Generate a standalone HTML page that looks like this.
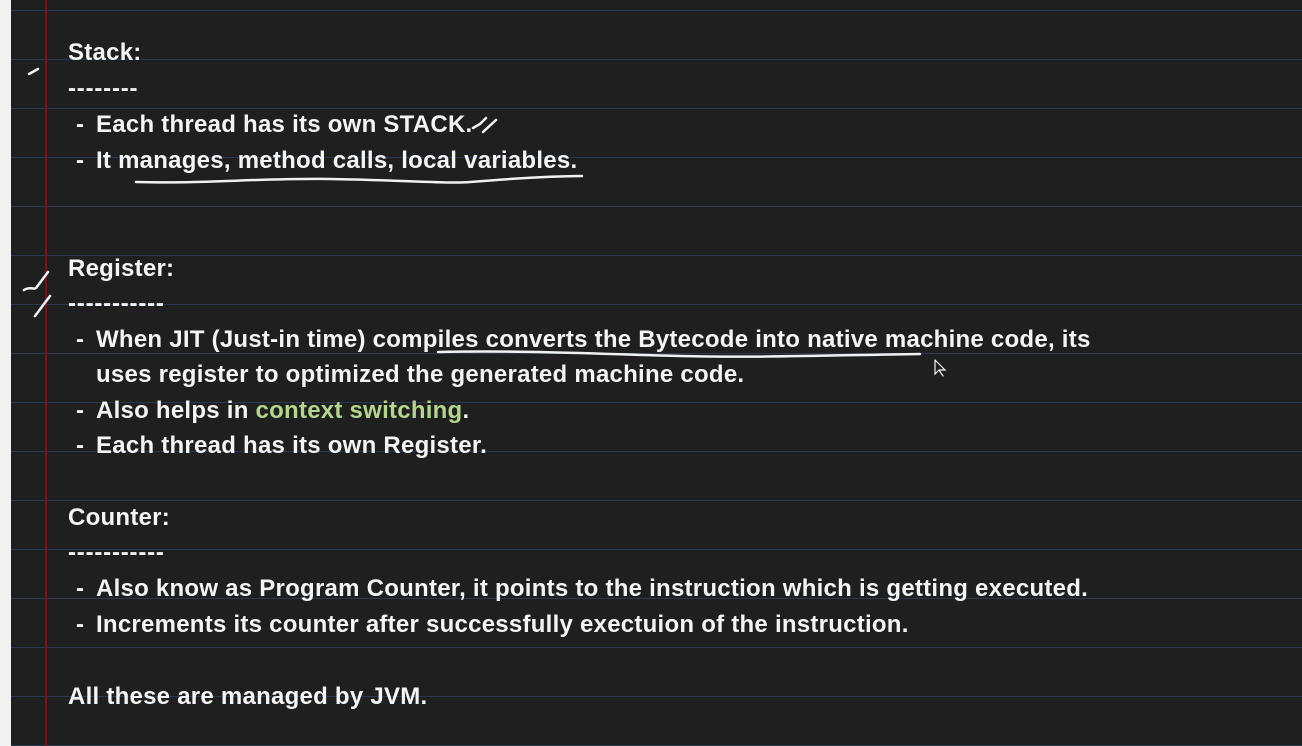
<!DOCTYPE html>
<html><head><meta charset="utf-8"><style>
html,body{margin:0;padding:0;}
body{width:1302px;height:746px;overflow:hidden;background:#1f1f1f;position:relative;font-family:"Liberation Sans",Arial,sans-serif;}
.strip{position:absolute;left:0;top:0;width:11px;height:746px;background:#f2f2f2;}
.hl{position:absolute;left:11px;width:1291px;height:1px;background:#293a50;}
.red{position:absolute;left:45px;top:0;width:2px;height:746px;background:#7a1212;}
.t{position:absolute;color:#f4f4f4;font-weight:bold;font-size:24px;letter-spacing:0.25px;line-height:28px;white-space:nowrap;margin-top:2px;}
.d{letter-spacing:0.8px;}
.g{color:#b3d68c;}
svg{position:absolute;left:0;top:0;}
</style></head><body>
<div class="strip"></div>
<div class="hl" style="top:10px"></div><div class="hl" style="top:59px"></div><div class="hl" style="top:108px"></div><div class="hl" style="top:157px"></div><div class="hl" style="top:206px"></div><div class="hl" style="top:255px"></div><div class="hl" style="top:304px"></div><div class="hl" style="top:353px"></div><div class="hl" style="top:402px"></div><div class="hl" style="top:451px"></div><div class="hl" style="top:500px"></div><div class="hl" style="top:549px"></div><div class="hl" style="top:598px"></div><div class="hl" style="top:647px"></div><div class="hl" style="top:696px"></div><div class="hl" style="top:745px"></div>
<div class="red"></div>

<div class="t" style="left:68px;top:37px">Stack:</div>
<div class="t d" style="left:68px;top:73px">--------</div>
<div class="t" style="left:76px;top:109px">-</div><div class="t" style="left:96px;top:109px">Each thread has its own STACK.</div>
<div class="t" style="left:76px;top:145px">-</div><div class="t" style="left:96px;top:145px">It manages, method calls, local variables.</div>

<div class="t" style="left:68px;top:253px">Register:</div>
<div class="t d" style="left:68px;top:288px">-----------</div>
<div class="t" style="left:76px;top:324px">-</div><div class="t" style="left:96px;top:324px">When JIT (Just-in time) compiles converts the Bytecode into native machine code, its</div>
<div class="t" style="left:96px;top:359px">uses register to optimized the generated machine code.</div>
<div class="t" style="left:76px;top:395px">-</div><div class="t" style="left:96px;top:395px">Also helps in <span class="g">context switching</span>.</div>
<div class="t" style="left:76px;top:430px">-</div><div class="t" style="left:96px;top:430px">Each thread has its own Register.</div>

<div class="t" style="left:68px;top:502px">Counter:</div>
<div class="t d" style="left:68px;top:537px">-----------</div>
<div class="t" style="left:76px;top:573px">-</div><div class="t" style="left:96px;top:573px">Also know as Program Counter, it points to the instruction which is getting executed.</div>
<div class="t" style="left:76px;top:609px">-</div><div class="t" style="left:96px;top:609px">Increments its counter after successfully exectuion of the instruction.</div>

<div class="t" style="left:68px;top:681px">All these are managed by JVM.</div>

<svg width="1302" height="746" fill="none" stroke="#f2f2f2" stroke-linecap="round" stroke-width="2.5">
<path d="M29 74 L38 69"/>
<path d="M473 128 L480 124 L486 118"/>
<path d="M483 132 L496 120"/>
<path d="M136 182 C200 184 260 178 330 179 C400 180 450 184 470 182 C520 178 560 176 582 176"/>
<path d="M24 290 C30 286 34 290 36 288 L48 272"/>
<path d="M35 316 L50 296"/>
<path d="M438 352 C520 350 600 354 680 356 C760 358 840 355 920 354"/>
<path d="M935 360 L935 374 L939 370 L943 376 M939 370 L945 370 L935 360" stroke-width="1.2"/>
</svg>
</body></html>
